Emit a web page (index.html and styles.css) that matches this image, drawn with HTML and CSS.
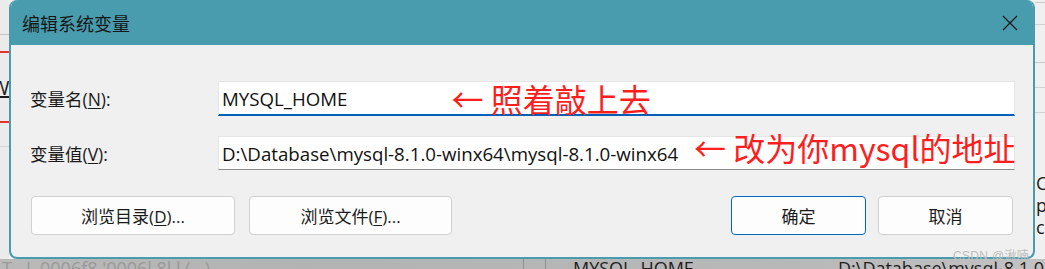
FILE: index.html
```html
<!DOCTYPE html>
<html lang="zh-CN">
<head>
<meta charset="utf-8">
<title>编辑系统变量</title>
<link rel="stylesheet" href="styles.css">
</head>
<body>
<div class="desk">
  <div class="behind">
    <div class="left-strip"><span class="w">W</span></div>
    <div class="middle"></div>
    <div class="right-strip"><span>C</span><span>pi</span><span>co</span></div>
    <div class="bottom-strip">
      <span class="faded">T&nbsp;&nbsp;&nbsp;L 0006f8 '0006l 8l l (...) </span>
      <span class="sep"></span>
      <span class="sep"></span>
      <span class="name">MYSQL_HOME</span>
      <span class="val">D:\Database\mysql-8.1.0</span>
    </div>
  </div>

  <div class="dialog">
    <div class="titlebar">
      <span class="title">编辑系统变量</span>
      <svg class="close" width="16" height="16" viewBox="0 0 16 16"><path d="M1 1 L15 15 M15 1 L1 15" stroke="#1b1b1b" stroke-width="1.3" fill="none"/></svg>
    </div>
    <div class="content">
      <div class="form">
        <label class="label">变量名(<u>N</u>):</label>
        <div class="field focused">
          <span class="value">MYSQL_HOME</span>
          <span class="note note-1">← 照着敲上去</span>
        </div>
        <label class="label">变量值(<u>V</u>):</label>
        <div class="field">
          <span class="value">D:\Database\mysql-8.1.0-winx64\mysql-8.1.0-winx64</span>
          <span class="note note-2">← 改为你mysql的地址</span>
        </div>
      </div>
      <div class="buttons">
        <div class="group group-left">
          <button class="btn btn-wide">浏览目录(<u>D</u>)...</button>
          <button class="btn btn-wide2">浏览文件(<u>F</u>)...</button>
        </div>
        <div class="group group-right">
          <button class="btn btn-ok">确定</button>
          <button class="btn btn-cancel">取消</button>
        </div>
      </div>
    </div>
  </div>
  <div class="watermark">CSDN @湫喃</div>
</div>
</body>
</html>
```
FILE: styles.css
```css
* { box-sizing: border-box; }
html, body { margin: 0; padding: 0; }
body {
  font-family: "Open Sans", "Noto Sans CJK SC", sans-serif;
  color: #1a1a1a;
  background: #f0f0f0;
}
.desk {
  position: relative;
  width: 1045px;
  height: 269px;
  overflow: hidden;
}
.behind {
  display: grid;
  grid-template-columns: 9px 1fr 10px;
  grid-template-rows: 259px 10px;
  height: 269px;
}
.left-strip {
  overflow: hidden;
  background-color: #ebebeb;
  background-image:
    linear-gradient(to bottom,
      transparent 34px, #c4c4c4 34px, #c4c4c4 35px, transparent 35px,
      transparent 51px, #e8322d 51px, #e8322d 53px, transparent 53px,
      transparent 121px, #e8322d 121px, #e8322d 123px, transparent 123px,
      transparent 146px, #d4d4d4 146px, #d4d4d4 147px, transparent 147px);
  display: flex;
  flex-direction: column;
  padding-top: 76px;
}
.left-strip .w {
  font-size: 20px;
  line-height: 24px;
  margin-left: -9px;
  text-decoration: underline;
  color: #1a1a1a;
}
.middle { background: #f0f0f0; }
.right-strip {
  overflow: hidden;
  background-color: #f0f0f0;
  background-image:
    linear-gradient(to bottom,
      transparent 2px, #c8c8c8 2px, #c8c8c8 3px, transparent 3px,
      transparent 24px, #d2d2d2 24px, #d2d2d2 25px, transparent 25px,
      transparent 62px, #c8c8c8 62px, #c8c8c8 63px, transparent 63px,
      transparent 87px, #d2d2d2 87px, #d2d2d2 88px, transparent 88px,
      transparent 112px, #d2d2d2 112px, #d2d2d2 113px, transparent 113px);
  display: flex;
  flex-direction: column;
  padding-top: 172px;
  padding-left: 1px;
  font-size: 18px;
  line-height: 22px;
  color: #1a1a1a;
  white-space: nowrap;
}
.bottom-strip {
  grid-column: 1 / -1;
  background: linear-gradient(to right, #b9b9b9 0px, #b3b3b3 300px, #b8b8b8 800px, #c2c2c2 1045px);
  display: grid;
  grid-template-columns: 523px 22px 28px 265px 1fr;
  overflow: hidden;
  font-size: 18px;
  line-height: 18px;
  white-space: nowrap;
}
.bottom-strip .faded { color: #9a9a9a; padding-left: 2px; overflow: hidden; }
.bottom-strip .sep { border-left: 1px solid #8f8f8f; }
.bottom-strip .name { color: #1f1f1f; }
.bottom-strip .val { color: #1f1f1f; }

/* dialog window */
.dialog {
  position: absolute;
  left: 9px;
  top: 0;
  width: 1026px;
  height: 259px;
  border: 2px solid #489cae;
  border-top: 0;
  border-radius: 8px;
  background: #f0f0f0;
  overflow: hidden;
  display: flex;
  flex-direction: column;
}
.titlebar {
  height: 45px;
  flex: none;
  background: #489cae;
  display: flex;
  align-items: center;
  justify-content: space-between;
  padding: 0 15px 0 11px;
}
.title {
  font-family: "Noto Sans CJK SC", sans-serif;
  font-size: 18px;
  color: #161616;
}
.close { display: block; }
.content {
  padding: 36px 18px 0 19px;
}
.form {
  display: grid;
  grid-template-columns: 188px 797px;
  row-gap: 20px;
  align-items: center;
}
.label {
  font-size: 17.5px;
  color: #1a1a1a;
}
.label u, .btn u { text-decoration-thickness: 1px; text-underline-offset: 2px; }
.field {
  height: 34px;
  background: #fff;
  border: 1px solid #e6e6e6;
  border-bottom-color: #8a8a8a;
  display: flex;
  align-items: center;
  padding-left: 3px;
  white-space: nowrap;
}
.field.focused {
  height: 35px;
  border-bottom: 2px solid #005fb8;
}
.value {
  font-size: 18.7px;
  color: #111;
}
.note {
  font-family: "Noto Sans CJK SC", sans-serif;
  font-size: 32px;
  line-height: 34px;
  color: #ff1e1e;
}
.note-1 { margin-left: 104px; }
.note-2 { margin-left: 16px; margin-bottom: 12px; }
.buttons {
  display: flex;
  justify-content: space-between;
  margin-top: 26px;
  padding: 0 2px 0 1px;
}
.group { display: flex; }
.group-left { gap: 14px; }
.group-right { gap: 12px; }
.btn {
  height: 39px;
  background: #fdfdfd;
  border: 1px solid #d0d0d0;
  border-radius: 4px;
  font-family: "Open Sans", "Noto Sans CJK SC", sans-serif;
  font-size: 17px;
  color: #1a1a1a;
  padding: 0;
}
.btn-wide { width: 204px; }
.btn-wide2 { width: 203px; }
.btn-ok { width: 135px; border-color: #0067c0; }
.btn-cancel { width: 135px; }
.watermark {
  position: absolute;
  right: 16px;
  top: 246px;
  font-family: "Liberation Sans", "Noto Sans CJK SC", sans-serif;
  font-size: 12px;
  color: #bdbdbd;
  letter-spacing: 0.3px;
}
```
